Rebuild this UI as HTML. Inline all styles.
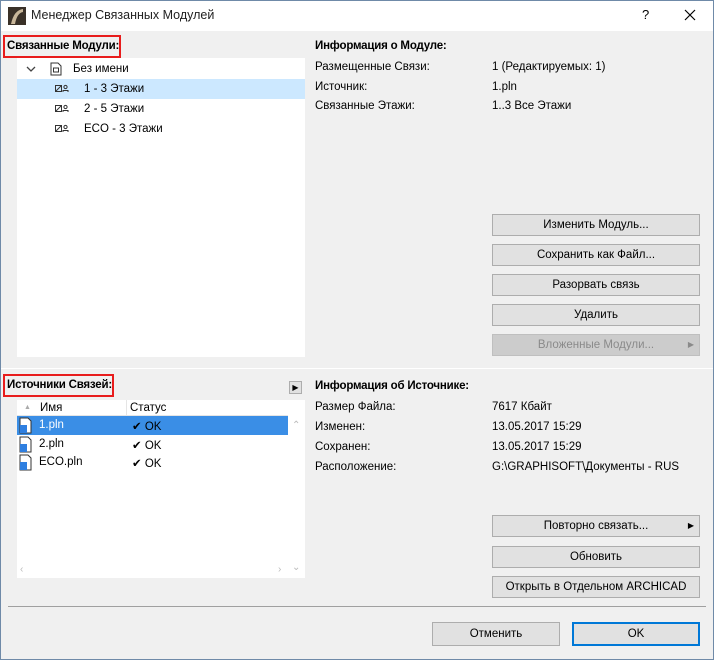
<!DOCTYPE html>
<html><head><meta charset="utf-8"><style>
*{margin:0;padding:0;box-sizing:border-box}
body{width:714px;height:660px;background:#f0f0f0;font-family:"Liberation Sans",sans-serif;font-size:11.5px;color:#000;position:relative;overflow:hidden}
.frame{position:absolute;left:0;top:0;width:714px;height:660px;border:1px solid #6f8aa8;pointer-events:none}
.a{position:absolute;white-space:nowrap}
.title{left:0;top:0;width:714px;height:31px;background:#fff}
.box{background:#fff}
.btn{position:absolute;background:#e1e1e1;border:1px solid #adadad;text-align:center;line-height:20px;height:22px;width:208px;left:492px}
.b{font-weight:bold;letter-spacing:-0.2px}
.red{border:2px solid #e81c1c}
</style></head><body>
<div class="a title"></div>
<svg class="a" style="left:8px;top:7px" width="18" height="18"><rect width="18" height="18" fill="#3a3128"/><path d="M3 17 Q6 3 15 2 L15 5 Q9 6 7 17Z" fill="#c9b79a"/></svg>
<div class="a" style="left:31px;top:8px;font-size:12.5px;color:#222">Менеджер Связанных Модулей</div>
<div class="a" style="left:642px;top:7px;font-size:13px">?</div>
<svg class="a" style="left:684px;top:9px" width="12" height="12"><path d="M1 1L11 11M11 1L1 11" stroke="#000" stroke-width="1.2"/></svg>

<div class="a red" style="left:3px;top:35px;width:118px;height:23px"></div>
<div class="a b" style="left:7px;top:40px">Связанные Модули:</div>
<div class="a box" style="left:17px;top:58px;width:288px;height:299px"></div>
<div class="a" style="left:17px;top:79px;width:288px;height:20px;background:#cce8ff"></div>
<svg class="a" style="left:26px;top:65px" width="10" height="8"><path d="M1 2L5 6L9 2" stroke="#444" fill="none" stroke-width="1.3"/></svg>
<svg class="a" style="left:50px;top:62px" width="12" height="14"><path d="M1 1H8L11 4V13H1Z" stroke="#333" fill="none"/><rect x="3.5" y="6" width="5" height="4" stroke="#333" fill="none"/></svg>
<div class="a" style="left:73px;top:63px">Без имени</div>
<svg class="a" style="left:55px;top:84px" width="14" height="9"><rect x="0.5" y="1.5" width="6" height="6" fill="none" stroke="#333"/><path d="M1 7L6 2" stroke="#333"/><circle cx="10.5" cy="3" r="1.6" fill="none" stroke="#333"/><path d="M8 8V6.5H13V8" fill="none" stroke="#333"/></svg>
<div class="a" style="left:84px;top:83px">1 - 3 Этажи</div>
<svg class="a" style="left:55px;top:104px" width="14" height="9"><rect x="0.5" y="1.5" width="6" height="6" fill="none" stroke="#333"/><path d="M1 7L6 2" stroke="#333"/><circle cx="10.5" cy="3" r="1.6" fill="none" stroke="#333"/><path d="M8 8V6.5H13V8" fill="none" stroke="#333"/></svg>
<div class="a" style="left:84px;top:103px">2 - 5 Этажи</div>
<svg class="a" style="left:55px;top:124px" width="14" height="9"><rect x="0.5" y="1.5" width="6" height="6" fill="none" stroke="#333"/><path d="M1 7L6 2" stroke="#333"/><circle cx="10.5" cy="3" r="1.6" fill="none" stroke="#333"/><path d="M8 8V6.5H13V8" fill="none" stroke="#333"/></svg>
<div class="a" style="left:84px;top:123px">ECO - 3 Этажи</div>

<div class="a b" style="left:315px;top:40px">Информация о Модуле:</div>
<div class="a" style="left:315px;top:61px">Размещенные Связи:</div>
<div class="a" style="left:492px;top:61px">1 (Редактируемых: 1)</div>
<div class="a" style="left:315px;top:81px">Источник:</div>
<div class="a" style="left:492px;top:81px">1.pln</div>
<div class="a" style="left:315px;top:100px">Связанные Этажи:</div>
<div class="a" style="left:492px;top:100px">1..3 Все Этажи</div>

<div class="btn" style="top:214px">Изменить Модуль...</div>
<div class="btn" style="top:244px">Сохранить как Файл...</div>
<div class="btn" style="top:274px">Разорвать связь</div>
<div class="btn" style="top:304px">Удалить</div>
<div class="btn" style="top:334px;background:#cccccc;border-color:#bfbfbf;color:#8a8a8a">Вложенные Модули...<span style="position:absolute;right:5px;font-size:8px">▶</span></div>

<div class="a" style="left:0;top:368px;width:714px;height:1px;background:#fff"></div>
<div class="a red" style="left:3px;top:374px;width:111px;height:23px"></div>
<div class="a b" style="left:7px;top:379px">Источники Связей:</div>
<div class="a" style="left:289px;top:381px;width:13px;height:13px;background:#e1e1e1;border:1px solid #adadad;font-size:8px;line-height:11px;text-align:center">▶</div>
<div class="a box" style="left:17px;top:400px;width:288px;height:178px"></div>
<div class="a" style="left:17px;top:400px;width:271px;height:16px;border-bottom:1px solid #e5e5e5"></div>
<div class="a" style="left:126px;top:400px;width:1px;height:16px;background:#e5e5e5"></div>
<div class="a" style="left:24px;top:404px;font-size:7px;color:#aaa">▲</div>
<div class="a" style="left:40px;top:402px">Имя</div>
<div class="a" style="left:130px;top:402px">Статус</div>
<div class="a" style="left:17px;top:416px;width:271px;height:19px;background:#3a8ee6"></div>
<div class="a" style="left:292px;top:420px;color:#bbb;font-size:10px">⌃</div>
<div class="a" style="left:292px;top:562px;color:#bbb;font-size:10px">⌄</div>
<div class="a" style="left:20px;top:564px;color:#bbb;font-size:10px">‹</div>
<div class="a" style="left:278px;top:564px;color:#bbb;font-size:10px">›</div>
<svg class="a" style="left:19px;top:417px" width="13" height="17"><path d="M1 1H9L12 4V16H1Z" fill="#fff" stroke="#333"/><rect x="1" y="8" width="7" height="8" fill="#2f7fe0"/></svg>
<div class="a" style="left:39px;top:419px;color:#fff">1.pln</div>
<div class="a" style="left:132px;top:419px">✔ OK</div>
<svg class="a" style="left:19px;top:436px" width="13" height="17"><path d="M1 1H9L12 4V16H1Z" fill="#fff" stroke="#333"/><rect x="1" y="8" width="7" height="8" fill="#2f7fe0"/></svg>
<div class="a" style="left:39px;top:438px">2.pln</div>
<div class="a" style="left:132px;top:438px">✔ OK</div>
<svg class="a" style="left:19px;top:454px" width="13" height="17"><path d="M1 1H9L12 4V16H1Z" fill="#fff" stroke="#333"/><rect x="1" y="8" width="7" height="8" fill="#2f7fe0"/></svg>
<div class="a" style="left:39px;top:456px">ECO.pln</div>
<div class="a" style="left:132px;top:456px">✔ OK</div>

<div class="a b" style="left:315px;top:380px">Информация об Источнике:</div>
<div class="a" style="left:315px;top:401px">Размер Файла:</div>
<div class="a" style="left:492px;top:401px">7617 Кбайт</div>
<div class="a" style="left:315px;top:421px">Изменен:</div>
<div class="a" style="left:492px;top:421px">13.05.2017 15:29</div>
<div class="a" style="left:315px;top:441px">Сохранен:</div>
<div class="a" style="left:492px;top:441px">13.05.2017 15:29</div>
<div class="a" style="left:315px;top:461px">Расположение:</div>
<div class="a" style="left:492px;top:461px">G:\GRAPHISOFT\Документы - RUS</div>

<div class="btn" style="top:515px">Повторно связать...<span style="position:absolute;right:5px;font-size:8px">▶</span></div>
<div class="btn" style="top:546px">Обновить</div>
<div class="btn" style="top:576px">Открыть в Отдельном ARCHICAD</div>
<div class="a" style="left:8px;top:606px;width:698px;height:1px;background:#a0a0a0"></div>
<div class="btn" style="left:432px;top:622px;width:128px;height:24px;line-height:22px">Отменить</div>
<div class="btn" style="left:572px;top:622px;width:128px;height:24px;line-height:20px;border:2px solid #0078d7">OK</div>
<div class="frame"></div>
</body></html>
